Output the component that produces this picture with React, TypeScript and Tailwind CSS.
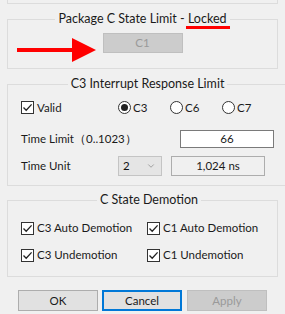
import { ChevronDown } from "lucide-react";

const Check = ({ label }: { label: string }) => (
  <label className="flex items-center gap-[3px] h-[16px]">
    <span className="w-[13px] h-[13px] border border-[#333] bg-white flex items-center justify-center">
      <svg width="11" height="11" viewBox="0 0 11 11">
        <path d="M1.5 5.5 L4.2 8.3 L9.6 2.4" fill="none" stroke="#222" strokeWidth="1.3" />
      </svg>
    </span>
    <span>{label}</span>
  </label>
);

const Radio = ({ label, checked }: { label: string; checked?: boolean }) => (
  <label className="flex items-center gap-[2px] w-[52px]">
    <span className="w-[13px] h-[13px] rounded-full border border-[#333] bg-white flex items-center justify-center">
      {checked && <span className="w-[7px] h-[7px] rounded-full bg-[#222]" />}
    </span>
    <span>{label}</span>
  </label>
);

const App = () => {
  return (
    <div className="relative w-[285px] h-[314px] overflow-hidden bg-[#f0f0f0] px-[7px] font-['Lato',sans-serif] text-[11.5px] leading-[16px] text-[#1a1a1a]">
      {/* end of the group above */}
      <div className="h-[4px] border-x border-b border-[#dcdcdc]" />

      {/* Package C State Limit */}
      <fieldset className="mt-[7px] border border-[#dcdcdc] px-0">
        <legend className="mx-auto px-[3px] text-[12.5px] leading-[16px]">
          Package C State Limit -{" "}
          <span className="relative">
            Locked
            <span className="absolute left-[-2px] right-[-3px] top-[15px] h-[3px] bg-[#ff0000]" />
          </span>
        </legend>
        <div className="flex justify-center pt-[6px] pb-[15px]">
          <button className="w-[80px] h-[20px] bg-[#cccccc] border border-[#bfbfbf] text-[#9a9a9a] text-[11.5px]">
            C1
          </button>
        </div>
      </fieldset>

      {/* C3 Interrupt Response Limit */}
      <fieldset className="mt-[7px] border border-[#dcdcdc] pl-[13px] pr-[11px]">
        <legend className="mx-auto px-[3px] text-[12.5px] leading-[16px]">C3 Interrupt Response Limit</legend>
        <div className="flex items-center h-[17px] mt-[7px]">
          <div className="w-[97px]">
            <Check label="Valid" />
          </div>
          <Radio label="C3" checked />
          <Radio label="C6" />
          <Radio label="C7" />
        </div>
        <div className="flex items-center justify-between h-[18px] mt-[14px]">
          <span>Time Limit（0..1023）</span>
          <div className="w-[94px] h-[18px] bg-white border border-[#7a7a7a] flex items-center justify-center">66</div>
        </div>
        <div className="flex items-center h-[20px] mt-[8px]">
          <span className="w-[97px]">Time Unit</span>
          <div className="w-[44px] h-[20px] bg-[#e5e5e5] border border-[#c4c4c4] flex items-center justify-between pl-[4px] pr-[5px] text-[#111]">
            <span>2</span>
            <ChevronDown className="w-[10px] h-[10px] text-[#777]" strokeWidth={1.5} />
          </div>
          <div className="ml-[9px] w-[94px] h-[20px] border border-[#adadad] flex items-center justify-center">1,024 ns</div>
        </div>
        <div className="h-[9px]" />
      </fieldset>

      {/* C State Demotion */}
      <fieldset className="mt-[6px] border border-[#dcdcdc] pl-[13px]">
        <legend className="mx-auto px-[3px] text-[12.5px] leading-[16px]">C State Demotion</legend>
        <div className="grid grid-cols-[126px_1fr] gap-y-[11px] pt-[12px] pb-[13px]">
          <Check label="C3 Auto Demotion" />
          <Check label="C1 Auto Demotion" />
          <Check label="C3 Undemotion" />
          <Check label="C1 Undemotion" />
        </div>
      </fieldset>

      <div className="flex gap-[4px] pl-[11px] mt-[13px]">
        <button className="w-[80px] h-[21px] bg-[#e1e1e1] border border-[#adadad]">OK</button>
        <button className="w-[80px] h-[21px] bg-[#e1e1e1] border-2 border-[#0078d7]">Cancel</button>
        <button className="ml-[1px] w-[80px] h-[21px] bg-[#cccccc] border border-[#bfbfbf] text-[#9a9a9a]">Apply</button>
      </div>

      {/* red arrow pointing at C1 */}
      <svg className="absolute left-[16px] top-[36px]" width="82" height="28" viewBox="0 0 82 28">
        <path d="M1 12 L56 12 L56 2 L80 14 L56 26 L56 16 L1 16 Z" fill="#ff0000" />
      </svg>
    </div>
  );
};

export default App;
